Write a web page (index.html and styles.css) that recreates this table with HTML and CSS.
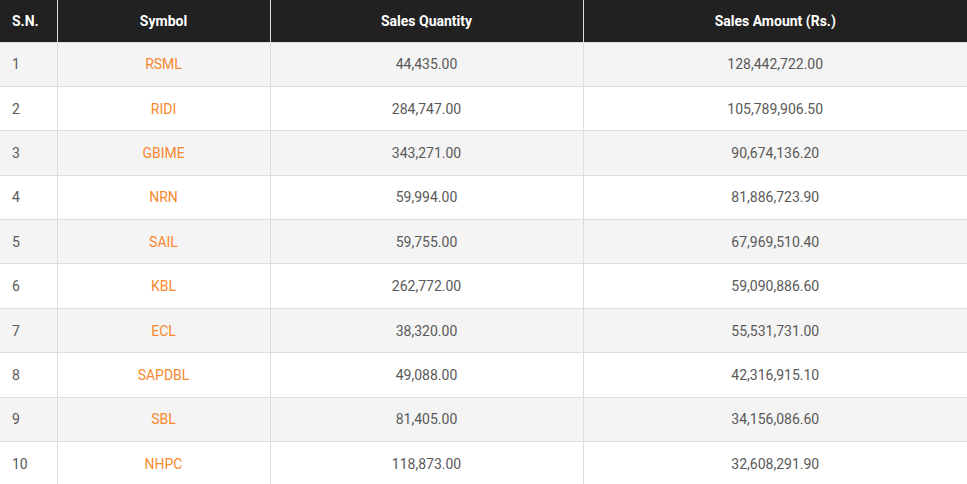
FILE: index.html
```html
<!DOCTYPE html>
<html>
<head>
<meta charset="utf-8">
<link rel="stylesheet" href="styles.css">
</head>
<body>
<table class="sales">
  <colgroup>
    <col class="c-sn"><col class="c-sym"><col class="c-qty"><col class="c-amt">
  </colgroup>
  <thead>
    <tr><th class="left">S.N.</th><th>Symbol</th><th>Sales Quantity</th><th>Sales Amount (Rs.)</th></tr>
  </thead>
  <tbody>
    <tr><td class="left">1</td><td class="sym">RSML</td><td>44,435.00</td><td>128,442,722.00</td></tr>
    <tr><td class="left">2</td><td class="sym">RIDI</td><td>284,747.00</td><td>105,789,906.50</td></tr>
    <tr><td class="left">3</td><td class="sym">GBIME</td><td>343,271.00</td><td>90,674,136.20</td></tr>
    <tr><td class="left">4</td><td class="sym">NRN</td><td>59,994.00</td><td>81,886,723.90</td></tr>
    <tr><td class="left">5</td><td class="sym">SAIL</td><td>59,755.00</td><td>67,969,510.40</td></tr>
    <tr><td class="left">6</td><td class="sym">KBL</td><td>262,772.00</td><td>59,090,886.60</td></tr>
    <tr><td class="left">7</td><td class="sym">ECL</td><td>38,320.00</td><td>55,531,731.00</td></tr>
    <tr><td class="left">8</td><td class="sym">SAPDBL</td><td>49,088.00</td><td>42,316,915.10</td></tr>
    <tr><td class="left">9</td><td class="sym">SBL</td><td>81,405.00</td><td>34,156,086.60</td></tr>
    <tr><td class="left">10</td><td class="sym">NHPC</td><td>118,873.00</td><td>32,608,291.90</td></tr>
  </tbody>
</table>
</body>
</html>
```
FILE: styles.css
```css
html, body {
  margin: 0;
  padding: 0;
  background: #fff;
}
body {
  font-family: Roboto, "Liberation Sans", sans-serif;
  width: 967px;
  height: 484px;
  overflow: hidden;
}
.sales {
  width: 967px;
  border-collapse: collapse;
  table-layout: fixed;
}
.c-sn { width: 57px; }
.c-sym { width: 213px; }
.c-qty { width: 313px; }
.c-amt { width: auto; }
.sales th {
  background: #212121;
  color: #fff;
  font-weight: 700;
  font-size: 14px;
  height: 42px;
  padding: 0 12px;
  text-align: center;
  border-left: 1px solid #ddd;
  border-bottom: 1px solid #ddd;
  box-sizing: border-box;
}
.sales th:first-child, .sales td:first-child { border-left: none; }
.sales td {
  font-size: 14px;
  color: #595959;
  text-align: center;
  height: 44.4px;
  padding: 0 12px;
  border-left: 1px solid #ddd;
  border-bottom: 1px solid #ddd;
  box-sizing: border-box;
}
.sales .left { text-align: left; }
.sales tbody tr:nth-child(odd) td { background: #f4f4f4; }
.sales td.sym { color: #f7882f; }
```
